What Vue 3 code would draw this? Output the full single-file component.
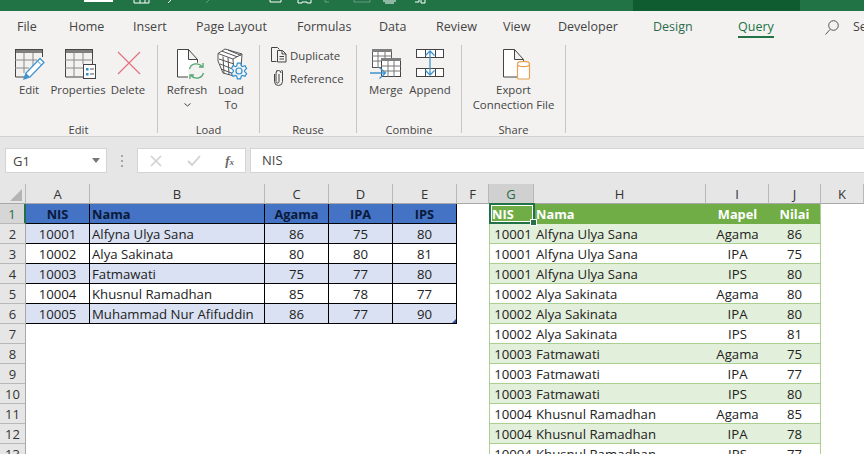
<template>
  <div class="excel">
    <!-- title bar, cut off at the top -->
    <div class="titlebar">
      <svg class="qat" width="633" height="11" viewBox="0 0 633 11" fill="none" stroke="#fff">
        <path d="M84 1h29" stroke-width="2" />
        <path d="M134 0v3h15v-3M140 0v3M145 0v3" />
        <path d="M168 3l3-3" />
        <path d="M206 3l3-3" stroke-opacity=".3" />
        <path d="M270 0v2h11v-2" />
        <path d="M298 0v3h4v-1h5v1h4v-3" />
        <path d="M325 0v2h4" stroke-opacity=".3" />
        <path d="M354 0v2h16v-2" stroke-opacity=".3" />
        <path d="M383 1h13M385 3h9" />
        <path d="M415 2h4v-2M421 0v3h4v-3" />
      </svg>
      <div class="tool-context"></div>
    </div>

    <!-- tabs -->
    <div class="tabs">
      <div
        v-for="t in tabs"
        :key="t.name"
        class="tab-slot"
        :style="{ width: t.w + 'px' }"
      >
        <span class="tab" :class="t.cls">{{ t.name }}</span>
      </div>
      <svg class="search-icon" width="16" height="18" viewBox="0 0 16 18" fill="none" stroke="#555">
        <circle cx="9.5" cy="6.5" r="4.8" />
        <path d="M6 10.5L1.5 15.5" />
      </svg>
      <span class="tab search-text">Search</span>
    </div>

    <!-- ribbon -->
    <div class="ribbon">
      <div class="rb-group g-edit">
        <div class="rb-items">
          <div class="rb-btn w48">
            <svg class="ic" viewBox="0 0 32 32" fill="none">
              <rect x="2" y="1" width="28" height="4" fill="#7f7f7f" />
              <path d="M2.500 1v28h9M29.500 1v8M2 1.500h28" stroke="#444" />
              <path d="M2 12h22M2 20h14M11 5v20M20 5v13" stroke="#8a8a8a" />
              <path d="M11 31l2-6L27 10.500l4 4L17 29z" fill="#fff" stroke="#3f94cf" stroke-width="1.300" />
              <path d="M11 31l2-6 4 4z" fill="#3f94cf" />
              <path d="M24.500 13l4 4" stroke="#3f94cf" />
            </svg>
            <span>Edit</span>
          </div>
          <div class="rb-btn w50">
            <svg class="ic" viewBox="0 0 32 32" fill="none">
              <rect x="3" y="1" width="28" height="4" fill="#7f7f7f" />
              <path d="M3.500 1v28h18M30.500 1v15M3 1.500h28" stroke="#444" />
              <path d="M3 12h28M3 20h18M12 5v24M21 5v11" stroke="#8a8a8a" />
              <rect x="21.500" y="16.500" width="12" height="14" fill="#fff" stroke="#444" />
              <path d="M24 20h2.500v2.500H24zM24 25h2.500v2.500H24z" fill="#2f8fcf" />
              <path d="M28 21h4M28 26h4" stroke="#555" />
            </svg>
            <span>Properties</span>
          </div>
          <div class="rb-btn w50">
            <svg class="ic" viewBox="0 0 32 32" fill="none">
              <path d="M6 4l22 22M28 4L6 26" stroke="#e2727d" stroke-width="1.200" />
            </svg>
            <span>Delete</span>
          </div>
        </div>
        <div class="rb-label">Edit</div>
      </div>

      <div class="rb-group g-load">
        <div class="rb-items">
          <div class="rb-btn w44">
            <svg class="ic" viewBox="0 0 32 32" fill="none">
              <path d="M17 29H6.500V1.500h11l9 10V15M17.500 1.500v10h9" stroke="#444" fill="#fff" />
              <circle cx="25.500" cy="23" r="8.500" fill="#f3f2f1" />
              <path d="M18.500 21a7.200 7.200 0 0 1 12.500-2.500M32.500 25a7.200 7.200 0 0 1-12.500 2.500" stroke="#4ea66d" stroke-width="1.300" />
              <path d="M32 15v4h-4M19 31v-4h4" stroke="#4ea66d" stroke-width="1.300" />
            </svg>
            <span>Refresh</span>
            <svg class="chev" width="7" height="4" viewBox="0 0 7 4" fill="none" stroke="#444"><path d="M.5.500l3 2.500 3-2.500" /></svg>
          </div>
          <div class="rb-btn w44">
            <svg class="ic" viewBox="0 0 32 32" fill="none">
              <path d="M3 5.500L10 1l17 5-1 14-7 8-11-3-5-12z" fill="#fff" stroke="#555" />
              <path d="M3 5.500l15 5.500 9-5M7 3.200l15 5.500M13 2l13 5.500M8 8.500l1 17M13 9.500l1 17M18 11l1 17M4 11l15 5M5 16l14 5.500M6 21l13 5" stroke="#555" />
              <polygon :points="gearPoints" fill="#f3f2f1" stroke="#2f8fcf" stroke-width="1.200" />
              <circle cx="24" cy="23" r="3" fill="none" stroke="#2f8fcf" stroke-width="1.200" />
            </svg>
            <span>Load<br />To</span>
          </div>
        </div>
        <div class="rb-label">Load</div>
      </div>

      <div class="rb-group g-reuse">
        <div class="rb-items stack">
          <div class="rb-small">
            <svg width="16" height="16" viewBox="0 0 16 16" fill="none" stroke="#444">
              <path d="M5.500 14.500H.5V.5h6l2 2" />
              <path d="M6.500 3.500h5l3.500 3.500v8h-8.500z" fill="#f3f2f1" />
              <path d="M11 3.500v3.500h4M8.500 9.500h4.500M8.500 12h4.500" />
            </svg>
            <span>Duplicate</span>
          </div>
          <div class="rb-small">
            <svg width="16" height="16" viewBox="0 0 16 16" fill="none" stroke="#444">
              <path d="M8 4v7.500a1.500 1.500 0 0 1-3 0V3a2.500 2.500 0 0 1 5 0" />
              <path d="M5.500 1.500A3 3 0 0 1 11.500 3v8.500a3.500 3.500 0 0 1-8 0V4" />
            </svg>
            <span>Reference</span>
          </div>
        </div>
        <div class="rb-label">Reuse</div>
      </div>

      <div class="rb-group g-combine">
        <div class="rb-items">
          <div class="rb-btn w44">
            <svg class="ic" viewBox="0 0 32 32" fill="none">
              <rect x="2.500" y="1.500" width="19" height="18" fill="#fff" stroke="#555" />
              <rect x="2" y="1" width="20" height="3" fill="#7f7f7f" />
              <path d="M2 8h20M2 13h20M8 4v16M15 4v16" stroke="#777" />
              <rect x="11.500" y="10.500" width="19" height="18" fill="#fff" stroke="#444" />
              <rect x="11" y="10" width="20" height="3" fill="#7f7f7f" />
              <path d="M11 18h20M11 23h20M18 13v16M24 13v16" stroke="#777" />
              <path d="M0 25h15M9.500 19.500L15.500 25l-6 5.500" stroke="#3f94cf" stroke-width="1.300" />
            </svg>
            <span>Merge</span>
          </div>
          <div class="rb-btn w44">
            <svg class="ic" viewBox="0 0 32 32" fill="none">
              <rect x="2.500" y="1.500" width="27" height="8" fill="#fff" stroke="#444" />
              <rect x="2.500" y="20.500" width="27" height="8" fill="#fff" stroke="#444" />
              <path d="M11.500 1.500v8M21.500 1.500v8M11.500 20.500v8M21.500 20.500v8" stroke="#444" />
              <path d="M16 3v24M11.500 7.500L16 3l4.500 4.500M11.500 22.500L16 27l4.500-4.500" stroke="#3f94cf" stroke-width="1.300" />
            </svg>
            <span>Append</span>
          </div>
        </div>
        <div class="rb-label">Combine</div>
      </div>

      <div class="rb-group g-share">
        <div class="rb-items center">
          <div class="rb-btn">
            <svg class="ic" viewBox="0 0 32 32" fill="none">
              <path d="M20 29H6.500V1.500h11l9 10V13M17.500 1.500v10h9" stroke="#444" fill="#fff" />
              <path d="M20.500 17v12.500a1.500 1.500 0 0 0 1.500 1.500h9a1.500 1.500 0 0 0 1.500-1.500V17" fill="#fff" stroke="#e9a04f" stroke-width="1.200" />
              <ellipse cx="26.500" cy="16" rx="6" ry="2.700" fill="#fff" stroke="#e9a04f" stroke-width="1.200" />
            </svg>
            <span>Export<br />Connection File</span>
          </div>
        </div>
        <div class="rb-label">Share</div>
      </div>
    </div>

    <!-- formula bar -->
    <div class="formula-row">
      <div class="name-box">
        <span>G1</span>
        <i class="drop"></i>
      </div>
      <div class="grip"><i></i><i></i><i></i></div>
      <div class="fx-box">
        <svg width="12" height="12" viewBox="0 0 12 12" fill="none" stroke="#d0d0d0" stroke-width="1.600"><path d="M1 1l10 10M11 1L1 11" /></svg>
        <svg width="14" height="12" viewBox="0 0 14 12" fill="none" stroke="#d0d0d0" stroke-width="1.800"><path d="M1 6l4 4 8-9" /></svg>
        <span class="fx">f<small>x</small></span>
      </div>
      <div class="formula-input">NIS</div>
    </div>

    <!-- sheet -->
    <div class="sheet">
      <div class="corner"><i></i></div>
      <div
        v-for="c in columns"
        :key="c"
        class="col-head"
        :class="{ active: c === 'G' }"
      >{{ c }}</div>
      <template v-for="(row, r) in rows" :key="r">
        <div class="row-head" :class="{ active: r === 0 }">{{ r + 1 }}</div>
        <div
          v-for="(cell, i) in row"
          :key="i"
          class="cell"
          :class="cell.cls"
        >{{ cell.text }}</div>
      </template>
    </div>
  </div>
</template>

<script setup>
const tabs = [
  { name: 'File', w: 52 },
  { name: 'Home', w: 64 },
  { name: 'Insert', w: 63 },
  { name: 'Page Layout', w: 101 },
  { name: 'Formulas', w: 82 },
  { name: 'Data', w: 57 },
  { name: 'Review', w: 67 },
  { name: 'View', w: 55 },
  { name: 'Developer', w: 95 },
  { name: 'Design', w: 85, cls: 't-design' },
  { name: 'Query', w: 87, cls: 't-query' }
]

const columns = ['A', 'B', 'C', 'D', 'E', 'F', 'G', 'H', 'I', 'J', 'K']

const students = [
  ['10001', 'Alfyna Ulya Sana', 86, 75, 80],
  ['10002', 'Alya Sakinata', 80, 80, 81],
  ['10003', 'Fatmawati', 75, 77, 80],
  ['10004', 'Khusnul Ramadhan', 85, 78, 77],
  ['10005', 'Muhammad Nur Afifuddin', 86, 77, 90]
]
const subjects = ['Agama', 'IPA', 'IPS']

// unpivot: tiap siswa jadi 3 baris
const unpivoted = students.flatMap((s) =>
  subjects.map((m, i) => [s[0], s[1], m, s[2 + i]])
)

const leftCells = (r) => {
  if (r === 0) {
    return ['NIS', 'Nama', 'Agama', 'IPA', 'IPS'].map((text, i) => ({
      text,
      cls: ['lt', 'lt-head', i === 1 ? 'left' : 'mid']
    }))
  }
  const s = students[r - 1]
  if (!s) return Array.from({ length: 5 }, () => ({ text: '', cls: [] }))
  return s.map((text, i) => ({
    text,
    cls: ['lt', r % 2 ? 'lt-odd' : '', i === 1 ? 'left' : 'mid', r === 5 && i === 4 ? 'resize' : '']
  }))
}

const rightCells = (r) => {
  if (r === 0) {
    return ['NIS', 'Nama', 'Mapel', 'Nilai'].map((text, i) => ({
      text,
      cls: ['rt', 'rt-head', i < 2 ? 'left' : 'mid', i === 0 ? 'selected' : '', i === 3 ? 'rt-end' : '']
    }))
  }
  return unpivoted[r - 1].map((text, i) => ({
    text,
    cls: ['rt', r % 2 ? 'rt-odd' : '', i === 1 ? 'left' : 'mid', i === 0 ? 'rt-start' : '', i === 3 ? 'rt-end' : '']
  }))
}

const rows = Array.from({ length: 13 }, (_, r) => [
  ...leftCells(r),
  { text: '', cls: [] },
  ...rightCells(r),
  { text: '', cls: [] }
])

// gigi roda untuk ikon Load To
const gearPoints = Array.from({ length: 6 }, (_, i) => {
  const a = (i * Math.PI) / 3
  return [[-0.42, 5.6], [-0.2, 8], [0.2, 8], [0.42, 5.6]]
    .map(([d, rad]) => `${(24 + rad * Math.sin(a + d)).toFixed(1)},${(23 - rad * Math.cos(a + d)).toFixed(1)}`)
    .join(' ')
}).join(' ')
</script>

<style scoped>
.excel {
  width: 864px;
  height: 454px;
  overflow: hidden;
  background: #fff;
  font-family: "Open Sans", "Noto Sans", sans-serif;
  font-size: 11.4px;
  color: #444;
}
.titlebar {
  display: flex;
  height: 11px;
  background: #217346;
}
.qat {
  flex: none;
}
.tool-context {
  width: 167px;
  background: #0f5c30;
}
.tabs {
  display: flex;
  align-items: flex-start;
  height: 29px;
  padding: 7px 0 0 17px;
  box-sizing: border-box;
  background: #f3f2f1;
  font-size: 12.5px;
  white-space: nowrap;
  overflow: hidden;
}
.tab-slot {
  flex: none;
}
.tab {
  display: inline-block;
  line-height: 18px;
  border-bottom: 2px solid transparent;
}
.t-design {
  color: #2e6b4c;
}
.t-query {
  color: #217346;
  font-weight: 500;
  border-bottom-color: #217346;
}
.search-icon {
  flex: none;
  margin: 1px 0 0 -1px;
}
.search-text {
  margin-left: 13px;
}
.ribbon {
  display: flex;
  height: 97px;
  padding-top: 5px;
  box-sizing: border-box;
  background: #f3f2f1;
  border-bottom: 1px solid #d2d2d2;
}
.rb-group {
  display: flex;
  flex-direction: column;
  height: 88px;
  padding-top: 3px;
  box-sizing: border-box;
  border-right: 1px solid #c8c6c4;
}
.g-edit {
  width: 158px;
  padding-left: 5px;
}
.g-load {
  width: 102px;
  padding-left: 7px;
}
.g-reuse {
  width: 97px;
  padding-left: 11px;
}
.g-combine {
  width: 105px;
  padding-left: 7px;
}
.g-share {
  width: 104px;
}
.rb-items {
  display: flex;
  flex: 1;
}
.rb-items.center {
  justify-content: center;
}
.rb-items.stack {
  flex-direction: column;
  gap: 7px;
  margin-top: -1px;
}
.rb-btn {
  display: flex;
  flex-direction: column;
  align-items: center;
  text-align: center;
  line-height: 15px;
  white-space: nowrap;
}
.w44 {
  width: 44px;
}
.w48 {
  width: 48px;
}
.w50 {
  width: 50px;
}
.ic {
  width: 32px;
  height: 32px;
  margin-bottom: 2px;
  overflow: visible;
}
.chev {
  margin-top: 6px;
}
.rb-small {
  display: flex;
  align-items: center;
  gap: 3px;
  height: 16px;
  white-space: nowrap;
}
.rb-label {
  line-height: 12px;
  margin-bottom: -3px;
  font-size: 11.2px;
  text-align: center;
}
.g-edit .rb-label {
  margin-left: -5px;
}
.g-load .rb-label,
.g-combine .rb-label {
  margin-left: -7px;
}
.g-reuse .rb-label {
  margin-left: -11px;
}
.formula-row {
  display: flex;
  align-items: center;
  height: 47px;
  padding: 11px 0 11px 5px;
  box-sizing: border-box;
  background: #e6e6e6;
}
.name-box {
  display: flex;
  align-items: center;
  justify-content: space-between;
  width: 102px;
  height: 25px;
  padding: 0 6px 0 7px;
  box-sizing: border-box;
  background: #fff;
  border: 1px solid #d4d4d4;
  font-size: 13px;
}
.drop {
  width: 0;
  height: 0;
  border-left: 4px solid transparent;
  border-right: 4px solid transparent;
  border-top: 5px solid #777;
}
.grip {
  display: flex;
  flex-direction: column;
  gap: 3px;
  margin: 0 14px;
}
.grip i {
  width: 2px;
  height: 2px;
  background: #a6a6a6;
}
.fx-box {
  display: flex;
  align-items: center;
  justify-content: space-between;
  width: 109px;
  height: 25px;
  padding: 0 11px 0 12px;
  box-sizing: border-box;
  background: #fff;
  border: 1px solid #d4d4d4;
}
.fx {
  font-family: "Liberation Serif", serif;
  font-style: italic;
  font-weight: 700;
  font-size: 13px;
  color: #666;
}
.fx small {
  font-size: 9px;
}
.formula-input {
  flex: 1;
  height: 25px;
  margin-left: 4px;
  padding-left: 11px;
  box-sizing: border-box;
  background: #fff;
  border: 1px solid #d4d4d4;
  border-right: none;
  line-height: 23px;
  font-size: 13px;
}
.sheet {
  display: grid;
  grid-template-columns: 26px 64px 175px 64px 64px 64px 32px 45px 172px 63px 52px 43px;
  grid-auto-rows: 20px;
  font-size: 13.2px;
  color: #222;
}
.corner {
  position: relative;
  background: #e6e6e6;
  border-right: 1px solid #b8b8b8;
  border-bottom: 1px solid #a8a8a8;
}
.corner i {
  position: absolute;
  right: 3px;
  bottom: 2px;
  border-left: 12px solid transparent;
  border-bottom: 12px solid #b4b4b4;
}
.col-head {
  background: #e6e6e6;
  border-right: 1px solid #b8b8b8;
  border-bottom: 1px solid #a8a8a8;
  text-align: center;
  line-height: 21px;
  font-size: 13px;
  color: #333;
}
.col-head:last-of-type {
  border-right: none;
}
.col-head.active {
  background: #d0d0d0;
  border-bottom: 1px solid #217346;
  color: #2a6a48;
}
.row-head {
  background: #e6e6e6;
  border-right: 1px solid #a8a8a8;
  border-bottom: 1px solid #b8b8b8;
  text-align: center;
  line-height: 21px;
  font-size: 13px;
  color: #333;
}
.row-head.active {
  background: #d6d6d6;
  border-right: 2px solid #217346;
  color: #217346;
}
.cell {
  line-height: 21px;
  padding: 0 1px;
  box-sizing: border-box;
  white-space: nowrap;
  overflow: hidden;
}
.mid {
  text-align: center;
}
.left {
  text-align: left;
  padding-left: 2px;
}
.lt {
  border-right: 1px solid #000;
  border-bottom: 1px solid #000;
}
.lt-head {
  background: #4472c4;
  color: #0a1a3a;
  font-size: 12.8px;
  font-weight: 700;
}
.lt-odd {
  background: #d9e1f2;
}
.resize {
  position: relative;
}
.resize::after {
  content: "";
  position: absolute;
  right: 0;
  bottom: 0;
  border-left: 4px solid transparent;
  border-bottom: 4px solid #2f4f9f;
}
.rt {
  border-bottom: 1px solid #a9d08e;
}
.rt-head {
  background: #70ad47;
  color: #fff;
  font-size: 12.8px;
  font-weight: 700;
  border-bottom-color: #70ad47;
}
.rt-odd {
  background: #e2efda;
}
.rt-start {
  border-left: 1px solid #a9d08e;
  padding-left: 3px;
}
.rt-end {
  border-right: 1px solid #a9d08e;
}
.selected {
  position: relative;
  overflow: visible;
  padding-left: 3px;
}
.selected::before {
  content: "";
  position: absolute;
  left: 0;
  top: -1px;
  right: -1px;
  bottom: -1px;
  border: 2px solid #217346;
  outline: 1px solid #fff;
  outline-offset: -3px;
}
.selected::after {
  content: "";
  position: absolute;
  right: -3px;
  bottom: -3px;
  width: 5px;
  height: 5px;
  background: #217346;
  border: 1px solid #fff;
}
</style>
